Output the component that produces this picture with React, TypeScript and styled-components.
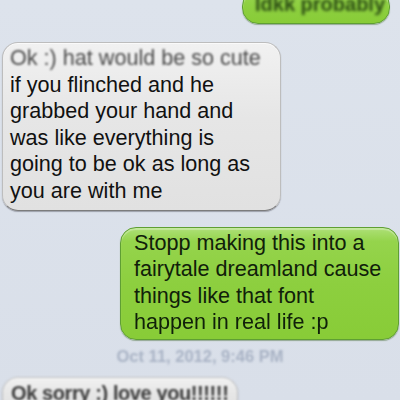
import React from 'react';
import styled, { createGlobalStyle, css } from 'styled-components';

const Global = createGlobalStyle`
    html, body {
        margin: 0;
        padding: 0;
        background: #dbe1ea;
        overflow: hidden;
    }
`;

const Thread = styled.div`
    width: 400px;
    height: 400px;
    overflow: hidden;
    display: flex;
    flex-direction: column;
    background: linear-gradient(to bottom, #dde3ec 0%, #d9dfe9 100%);
    font: 400 21.6px "Liberation Sans", Arial, sans-serif;
`;

interface RowProps {
    mine?: boolean
    top: number
}

const Row = styled.div<RowProps>`
    display: flex;
    justify-content: ${props => (props.mine ? 'flex-end' : 'flex-start')};
    margin-top: ${props => props.top}px;
    padding: 0 ${props => (props.mine ? 1 : 0)}px 0 ${props => (props.mine ? 0 : 2)}px;
    flex-shrink: 0;
`;

interface BubbleProps {
    mine?: boolean
    width: number
}

const grayBubble = css`
    background: linear-gradient(to bottom, #f1f1f1 0%, #e6e6e6 45%, #e1e1e1 100%);
    border: 1px solid #bdbdbd;
    border-bottom-color: #7c7c7c;
    box-shadow: 0 1px 1px rgba(80, 80, 90, 0.45), inset 0 1px 0 #fafafa;
    color: #111;
    padding: 2px 8px 5px 7px;
`;

const greenBubble = css`
    background: linear-gradient(to bottom, #ade077 0%, #95d44c 12%, #8dcf3f 50%, #88cc37 100%);
    border: 1px solid #5f9f33;
    box-shadow: 0 1px 1px rgba(60, 100, 40, 0.45), inset 0 2px 1px rgba(255, 255, 255, 0.3);
    color: #10200a;
    padding: 2px 8px 3px 13px;
`;

const Bubble = styled.div<BubbleProps>`
    box-sizing: border-box;
    width: ${props => props.width}px;
    border-radius: 16px;
    line-height: 26.6px;
    ${props => (props.mine ? greenBubble : grayBubble)}
`;

interface LineProps {
    blur?: number
    faded?: boolean
}

const Line = styled.div<LineProps>`
    white-space: nowrap;
    filter: ${props => (props.blur ? `blur(${props.blur}px)` : 'none')};
    color: ${props => (props.faded ? '#4a4a4a' : 'inherit')};
`;

const Stamp = styled.div`
    margin-top: 6px;
    text-align: center;
    font: 700 16.5px "Liberation Sans", Arial, sans-serif;
    line-height: 20px;
    color: #a9b3c5;
    filter: blur(1.3px);
    flex-shrink: 0;
`;

const TopBubble = styled(Bubble)`
    height: 34px;
    margin-right: 9px;
    padding: 3px 0 0 12px;
    line-height: 20px;
    font-size: 20px;
    font-weight: 700;
    color: #2c4d14;
`;

const LastBubble = styled(Bubble)`
    padding: 2px 10px 6px 8px;
    font-size: 20px;
    font-weight: 700;
    letter-spacing: -0.4px;
    color: #3c3c3c;
    filter: blur(1.2px);
`;

export default function App() {
    return (
        <>
            <Global />
            <Thread>
                <Row mine top={-10}>
                    <TopBubble mine width={148}>
                        <Line blur={1.4}>Idkk probably</Line>
                    </TopBubble>
                </Row>
                <Row top={18}>
                    <Bubble width={279}>
                        <Line blur={0.9} faded>Ok :) hat would be so cute</Line>
                        <Line>if you flinched and he</Line>
                        <Line>grabbed your hand and</Line>
                        <Line>was like everything is</Line>
                        <Line>going to be ok as long as</Line>
                        <Line>you are with me</Line>
                    </Bubble>
                </Row>
                <Row mine top={16}>
                    <Bubble mine width={279}>
                        <Line>Stopp making this into a</Line>
                        <Line>fairytale dreamland cause</Line>
                        <Line>things like that font</Line>
                        <Line blur={0.6}>happen in real life :p</Line>
                    </Bubble>
                </Row>
                <Stamp>Oct 11, 2012, 9:46 PM</Stamp>
                <Row top={11}>
                    <LastBubble width={236}>
                        <Line>Ok sorry :) love you!!!!!!</Line>
                    </LastBubble>
                </Row>
            </Thread>
        </>
    );
}
